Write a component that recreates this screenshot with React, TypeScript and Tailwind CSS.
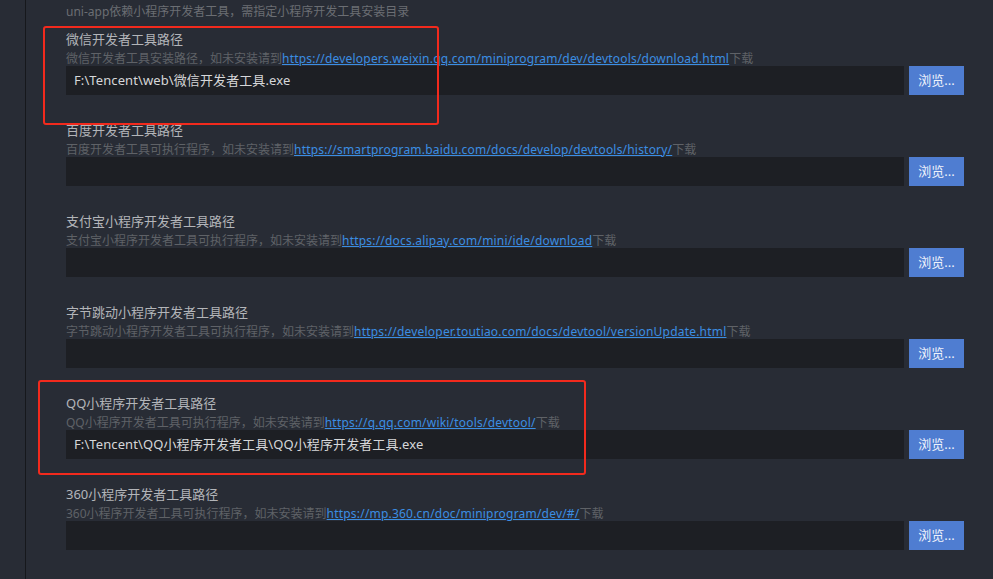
const groups = [
  {
    title: "微信开发者工具路径",
    desc: "微信开发者工具安装路径，如未安装请到",
    url: "https://developers.weixin.qq.com/miniprogram/dev/devtools/download.html",
    value: "F:\\Tencent\\web\\微信开发者工具.exe",
  },
  {
    title: "百度开发者工具路径",
    desc: "百度开发者工具可执行程序，如未安装请到",
    url: "https://smartprogram.baidu.com/docs/develop/devtools/history/",
    value: "",
  },
  {
    title: "支付宝小程序开发者工具路径",
    desc: "支付宝小程序开发者工具可执行程序，如未安装请到",
    url: "https://docs.alipay.com/mini/ide/download",
    value: "",
  },
  {
    title: "字节跳动小程序开发者工具路径",
    desc: "字节跳动小程序开发者工具可执行程序，如未安装请到",
    url: "https://developer.toutiao.com/docs/devtool/versionUpdate.html",
    value: "",
  },
  {
    title: "QQ小程序开发者工具路径",
    desc: "QQ小程序开发者工具可执行程序，如未安装请到",
    url: "https://q.qq.com/wiki/tools/devtool/",
    value: "F:\\Tencent\\QQ小程序开发者工具\\QQ小程序开发者工具.exe",
  },
  {
    title: "360小程序开发者工具路径",
    desc: "360小程序开发者工具可执行程序，如未安装请到",
    url: "https://mp.360.cn/doc/miniprogram/dev/#/",
    value: "",
  },
];

export default function App() {
  return (
    <div
      className="relative flex h-[579px] w-[993px] overflow-hidden bg-[#282c35]"
      style={{ fontFamily: '"Noto Sans", "Noto Sans CJK SC", sans-serif' }}
    >
      <div className="w-[26px] shrink-0 border-r-[1.5px] border-[#16181c] bg-[#282c35]" />
      <div className="flex-1 pl-[40px] pr-[29px] pt-[4px]">
        <div className="mb-[11px] text-[12px] leading-[16px] text-[#6b6e73]">
          uni-app依赖小程序开发者工具，需指定小程序开发工具安装目录
        </div>
        {groups.map((g) => (
          <div key={g.title} className="mb-[27px]">
            <div className="text-[13px] leading-[16px] text-[#b3b5b9]">{g.title}</div>
            <div className="h-[19px] whitespace-nowrap pt-[4px] text-[12px] leading-[15px] text-[#5f6267]">
              {g.desc}
              <span className="tracking-[0.2px] text-[#3b8ee3] underline">{g.url}</span>
              下载
            </div>
            <div className="relative flex h-[29px] gap-[5px]">
              <div className="flex flex-1 items-center bg-[#1d1f24] pl-[8px] text-[13px] tracking-[0.1px] text-[#d6d7d9]">
                {g.value}
              </div>
              <button className="w-[55px] bg-[#4f7dd1] text-[13px] text-[#eef2fb]">浏览...</button>
            </div>
          </div>
        ))}
      </div>
      <div className="absolute left-[43px] top-[26px] h-[99px] w-[396px] rounded-[3px] border-2 border-[#f22a1d]" />
      <div className="absolute left-[38px] top-[380px] h-[95px] w-[548px] rounded-[3px] border-2 border-[#f22a1d]" />
    </div>
  );
}
